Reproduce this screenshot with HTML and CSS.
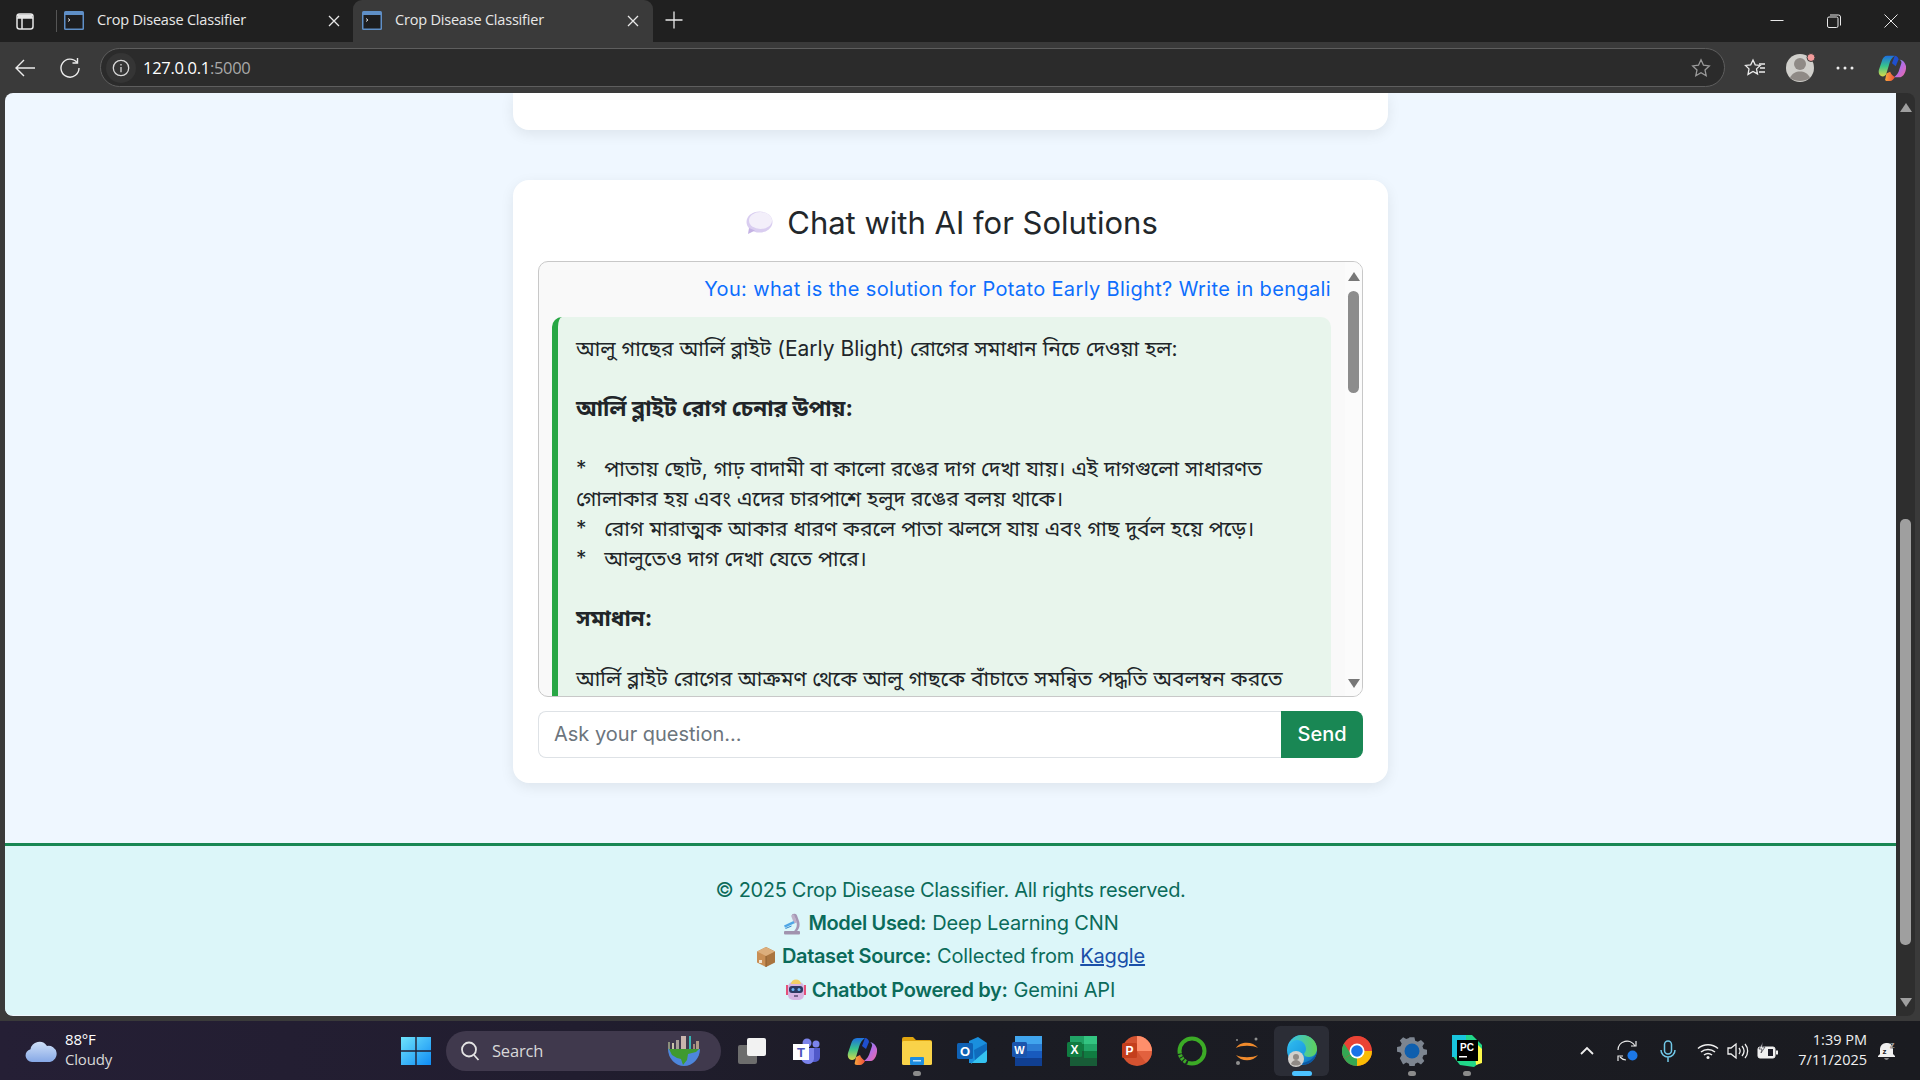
FILE: index.html
```html
<!DOCTYPE html>
<html lang="en">
<head>
    <meta charset="UTF-8">
    <meta name="viewport" content="width=device-width, initial-scale=1.0">
    <title>Crop Disease Classifier</title>
    <link rel="stylesheet" href="styles.css">
</head>
<body>
<div class="screen">

    <!-- Tab strip -->
    <header class="tabstrip">
        <svg class="tab-sidebar" width="20" height="20" viewBox="0 0 20 20" fill="none" stroke="#e6e6e6" stroke-width="1.5"><rect x="2" y="3" width="16" height="15" rx="2.5"/><path d="M2 7h16M7 7v11"/><path d="M3 3.5h14v3.5H3z" fill="#e6e6e6" stroke="none"/></svg>
        <span class="tab-divider"></span>
        <div class="tab">
            <svg class="favicon" width="20" height="19" viewBox="0 0 20 19"><rect width="20" height="19" rx="1.5" fill="#5f8fc7"/><rect x="1.5" y="4" width="17" height="13.5" fill="#1d1d1f"/><path d="M4 7.5l2 1.5-2 1.5" stroke="#d8d8d8" fill="none"/></svg>
            <span class="tab-title">Crop Disease Classifier</span>
            <svg class="tab-close" width="14" height="14" viewBox="0 0 14 14" stroke="#e8e8e8" stroke-width="1.3"><path d="M2 2l10 10M12 2L2 12"/></svg>
        </div>
        <div class="tab tab-active">
            <svg class="favicon" width="20" height="19" viewBox="0 0 20 19"><rect width="20" height="19" rx="1.5" fill="#5f8fc7"/><rect x="1.5" y="4" width="17" height="13.5" fill="#1d1d1f"/><path d="M4 7.5l2 1.5-2 1.5" stroke="#d8d8d8" fill="none"/></svg>
            <span class="tab-title">Crop Disease Classifier</span>
            <svg class="tab-close" width="14" height="14" viewBox="0 0 14 14" stroke="#e8e8e8" stroke-width="1.3"><path d="M2 2l10 10M12 2L2 12"/></svg>
        </div>
        <svg class="tab-new" width="18" height="18" viewBox="0 0 18 18" stroke="#e8e8e8" stroke-width="1.3"><path d="M9 0.5v17M0.5 9h17"/></svg>
        <div class="window-controls">
            <svg width="14" height="14" viewBox="0 0 14 14" stroke="#e8e8e8" stroke-width="1"><path d="M0.5 6.5h13"/></svg>
            <svg width="14" height="14" viewBox="0 0 14 14" fill="none" stroke="#e8e8e8" stroke-width="1"><rect x="0.5" y="3" width="10.5" height="10.5" rx="1.5"/><path d="M3 1h8.5A2 2 0 0 1 13.5 3v8.5"/></svg>
            <svg width="14" height="14" viewBox="0 0 14 14" stroke="#e8e8e8" stroke-width="1"><path d="M0.5 0.5l13 13M13.5 0.5l-13 13"/></svg>
        </div>
    </header>

    <!-- Address bar -->
    <div class="toolbar">
        <svg class="tool-back" width="22" height="20" viewBox="0 0 22 20" fill="none" stroke="#ececec" stroke-width="1.4"><path d="M21 10H2M10 2l-8 8 8 8"/></svg>
        <svg class="tool-reload" width="22" height="22" viewBox="0 0 22 22" fill="none" stroke="#ececec" stroke-width="1.4"><path d="M18 5.5A9 9 0 1 0 20 11"/><path d="M18.5 1v5h-5"/></svg>
        <div class="addressbar">
            <span class="site-info"><svg width="18" height="18" viewBox="0 0 18 18" fill="none" stroke="#d8d8d8" stroke-width="1.3"><circle cx="9" cy="9" r="7.7"/><path d="M9 8v5.2M9 5v1.5"/></svg></span>
            <span class="url">127.0.0.1<span class="url-port">:5000</span></span>
            <svg class="addr-star" width="20" height="20" viewBox="0 0 20 20" fill="none" stroke="#9a9a9a" stroke-width="1.3"><path d="M10 1.8l2.5 5.4 5.8.7-4.3 4 1.2 5.8-5.2-2.9-5.2 2.9 1.2-5.8-4.3-4 5.8-.7z"/></svg>
        </div>
        <svg class="tool-fav" width="22" height="20" viewBox="0 0 22 20" fill="none" stroke="#ececec" stroke-width="1.3"><path d="M9 2l2.200 4.800 5 .6-3.700 3.500 1 5-4.500-2.500-5 3 1-5.500-3.500-3.500 5.200-.6z"/><path d="M15 6h6M16 10h5M15 14h6"/></svg>
        <span class="avatar">
            <svg width="30" height="30" viewBox="0 0 30 30"><circle cx="14" cy="15" r="14" fill="#d0cfcb"/><circle cx="14" cy="11" r="6" fill="#8f8a86"/><path d="M4 25c2-5 6-6.500 10-6.500S22 20 24 25c-5.500 4-14.500 4-20 0z" fill="#8f8a86"/><circle cx="25" cy="4.500" r="4" fill="#f49c9c" stroke="#3a3a3a"/></svg>
        </span>
        <svg class="tool-more" width="18" height="4" viewBox="0 0 18 4" fill="#ececec"><circle cx="2" cy="2" r="1.500"/><circle cx="9" cy="2" r="1.500"/><circle cx="16" cy="2" r="1.500"/></svg>
        <svg class="tool-copilot" width="28" height="28" viewBox="0 0 30 30"><use href="#copilot"/></svg>
    </div>

    <div class="viewport">
        <main class="page">
            <div class="card card-cut"></div>

            <section class="card chat-card">
                <h2 class="chat-title">
                    <svg width="30" height="24" viewBox="0 0 30 24"><ellipse cx="16.500" cy="11" rx="13" ry="10.500" fill="#d9cdf0"/><ellipse cx="17.500" cy="9.500" rx="11.500" ry="8.500" fill="#f3effa"/><path d="M6 17l-1 6 7-3.500z" fill="#c4b2e4"/></svg>
                    Chat with AI for Solutions
                </h2>

                <div class="chat-box">
                    <div class="chat-scroll">
                        <p class="msg-user">You: what is the solution for Potato Early Blight? Write in bengali</p>
                        <div class="msg-bot">
                            আলু গাছের আর্লি ব্লাইট (Early Blight) রোগের সমাধান নিচে দেওয়া হল:<br><br>
                            <strong>আর্লি ব্লাইট রোগ চেনার উপায়:</strong><br><br>
                            *&nbsp;&nbsp; পাতায় ছোট, গাঢ় বাদামী বা কালো রঙের দাগ দেখা যায়। এই দাগগুলো সাধারণত<br>
                            গোলাকার হয় এবং এদের চারপাশে হলুদ রঙের বলয় থাকে।<br>
                            *&nbsp;&nbsp; রোগ মারাত্মক আকার ধারণ করলে পাতা ঝলসে যায় এবং গাছ দুর্বল হয়ে পড়ে।<br>
                            *&nbsp;&nbsp; আলুতেও দাগ দেখা যেতে পারে।<br><br>
                            <strong>সমাধান:</strong><br><br>
                            আর্লি ব্লাইট রোগের আক্রমণ থেকে আলু গাছকে বাঁচাতে সমন্বিত পদ্ধতি অবলম্বন করতে<br>
                            হবে। নিচে কিছু পদ্ধতি আলোচনা করা হলো:
                        </div>
                    </div>
                    <div class="chat-scrollbar">
                        <span class="arrow-up arrow-dark"></span>
                        <span class="chat-thumb"></span>
                        <span class="arrow-down arrow-dark"></span>
                    </div>
                </div>

                <form class="chat-form">
                    <input class="chat-input" type="text" placeholder="Ask your question...">
                    <button class="chat-send" type="button">Send</button>
                </form>
            </section>

            <footer class="site-footer">
                <p class="footer-copy">© 2025 Crop Disease Classifier. All rights reserved.</p>
                <p>
                    <svg class="emoji" width="20" height="22" viewBox="0 0 20 22"><path d="M10 1.500a3 2.500 0 0 1 5 1l2 5.500c1.500 4.500 0 8.500-2.500 10.500h-3c2.500-2 4-5.500 3-9l-1.500-4.500c-1.800.5-3-1.500-3-3.500z" fill="#a596b4"/><path d="M9 2.500l3-1 3 8-3 1z" fill="#bdb1c9"/><path d="M2 12.500l9.500-4.500 1 2.200-9.500 4.500z" fill="#4fa6e6"/><path d="M3.500 15.500l6-2.500" stroke="#2f86cc"/><rect x="2" y="18" width="16" height="3.500" rx="1" fill="#a193ae"/></svg>
                    <strong>Model Used:</strong> Deep Learning CNN
                </p>
                <p>
                    <svg class="emoji" width="20" height="22" viewBox="0 0 20 22"><path d="M10 1l9 4.500v11L10 21z" fill="#a9743f"/><path d="M10 1L1 5.500v11L10 21z" fill="#c98f55"/><path d="M1 5.500L10 10l9-4.500-9-4.500z" fill="#dcae7c"/><path d="M10 10v11" stroke="#8d5f31"/><rect x="3" y="14" width="3" height="3" fill="#efe2cf"/></svg>
                    <strong>Dataset Source:</strong> Collected from <a class="footer-link" href="#">Kaggle</a>
                </p>
                <p>
                    <svg class="emoji" width="20" height="22" viewBox="0 0 20 22"><path d="M1 6v10M19 6v10" stroke="#e4527a" stroke-width="2"/><rect x="2" y="3" width="16" height="18" rx="5" fill="#d6b5e2"/><rect x="3" y="7" width="14" height="7" rx="3" fill="#2c3a63"/><circle cx="7" cy="10.500" r="1.500" fill="#6fb7f4"/><circle cx="13" cy="10.500" r="1.500" fill="#6fb7f4"/><path d="M5 5a5 4.500 0 0 1 10 0z" fill="#f2cf66"/><path d="M8 17h4" stroke="#4a3a63" stroke-width="1.300"/></svg>
                    <strong>Chatbot Powered by:</strong> Gemini API
                </p>
            </footer>
        </main>

        <div class="scrollbar">
            <span class="arrow-up"></span>
            <span class="scroll-thumb"></span>
            <span class="arrow-down"></span>
        </div>
    </div>

    <!-- Windows taskbar -->
    <div class="taskbar">
        <div class="weather">
            <svg width="32" height="24" viewBox="0 0 32 24"><defs><linearGradient id="cloud" x1="0" y1="0" x2="0" y2="1"><stop offset="0" stop-color="#cfe0f8"/><stop offset="1" stop-color="#86a8e6"/></linearGradient></defs><path d="M7 23a6.500 6.500 0 0 1-1.500-12.800A9 9 0 0 1 22 7a8 8 0 0 1 3 16z" fill="url(#cloud)"/></svg>
            <div class="weather-text"><span>88°F</span><span class="weather-sub">Cloudy</span></div>
        </div>

        <svg class="win-logo" width="30" height="30" viewBox="0 0 30 30"><defs><linearGradient id="win" x1="0" y1="0" x2="1" y2="1"><stop offset="0" stop-color="#6fe3fb"/><stop offset="1" stop-color="#0f8cf5"/></linearGradient></defs><path d="M0 1h14.300v13.300H0zM15.700 1H30v13.300H15.700zM0 15.700h14.300V29H0zM15.700 15.700H30V29H15.700z" fill="url(#win)"/></svg>

        <div class="search">
            <svg width="20" height="22" viewBox="0 0 20 22" fill="none" stroke="#e4e4e4" stroke-width="1.800"><circle cx="9" cy="9.500" r="7"/><path d="M14 15l4.500 5"/></svg>
            <span class="search-label">Search</span>
            <svg class="search-globe" width="34" height="30" viewBox="0 0 34 30"><rect x="1" y="6" width="2" height="8" fill="#8b8f7c"/><rect x="5" y="7" width="2" height="8" fill="#c9c4a8"/><rect x="9" y="4" width="3" height="11" fill="#a89f97"/><rect x="14" y="0" width="5" height="15" fill="#c9b4ad"/><rect x="22" y="0" width="2" height="15" fill="#35b5b5"/><rect x="26" y="8" width="2" height="7" fill="#a58b78"/><rect x="29" y="5" width="3" height="10" fill="#b09a86"/><path d="M1 13h32a16 17 0 0 1-32 0z" fill="#4d86dc"/><path d="M2 13h30l-3 3-8 2-1 6-4 5-2-6-4-1-5-3z" fill="#3f9a2f"/></svg>
        </div>

        <div class="task-apps">
            <span class="app">
                <svg width="30" height="30" viewBox="0 0 30 30"><rect x="1" y="9" width="19" height="19" rx="2" fill="#6d6d6d"/><rect x="10" y="2" width="19" height="18" rx="2" fill="#f2f2f2"/></svg>
            </span>
            <span class="app">
                <svg width="30" height="30" viewBox="0 0 30 30"><circle cx="24" cy="8" r="3.500" fill="#7b83eb"/><circle cx="15" cy="7" r="4.500" fill="#7b83eb"/><path d="M19 12h9v9a5 5 0 0 1-5 5h-4z" fill="#5059c9"/><path d="M9 12h13v11a6 6 0 0 1-6 5 7 7 0 0 1-7-7z" fill="#7b83eb"/><rect x="1" y="8" width="16" height="16" fill="#fff"/><text class="app-letter" x="9" y="21" fill="#4b53bc" font-size="13">T</text></svg>
            </span>
            <span class="app"><svg width="30" height="34" viewBox="0 0 30 30"><use href="#copilot"/></svg></span>
            <span class="app app-open">
                <svg width="30" height="30" viewBox="0 0 30 30"><path d="M0 3a2 2 0 0 1 2-2h9l3 3h14a2 2 0 0 1 2 2v3H0z" fill="#e0a50f"/><rect y="5" width="30" height="24" rx="1.500" fill="#f9d349"/><rect x="8" y="21" width="14" height="8" rx="1" fill="#1d8de0"/><rect x="11" y="24" width="8" height="1.500" fill="#bfe3fb"/></svg>
            </span>
            <span class="app">
                <svg width="30" height="30" viewBox="0 0 30 30"><path d="M12 5l9-4 9 6v17a3 3 0 0 1-3 3H12z" fill="#1a8fdd"/><path d="M14 28l16-16v12a3 3 0 0 1-3 3H14z" fill="#35c3f0"/><path d="M17 14l13-7v7L18 24z" fill="#0f6cbd"/><rect y="7" width="16" height="16" rx="1.500" fill="#0f62b5"/><text class="app-letter" x="8" y="20" fill="#fff" font-size="13">O</text></svg>
            </span>
            <span class="app">
                <svg width="30" height="30" viewBox="0 0 30 30"><rect x="3" y="0" width="27" height="8" fill="#41a5ee"/><rect x="3" y="8" width="27" height="7" fill="#2b7cd3"/><rect x="3" y="15" width="27" height="7" fill="#185abd"/><rect x="3" y="22" width="27" height="8" fill="#103f91"/><rect y="6" width="15" height="15" rx="1.500" fill="#1a55ad"/><text class="app-letter" x="7.500" y="18" fill="#fff" font-size="11">W</text></svg>
            </span>
            <span class="app">
                <svg width="30" height="30" viewBox="0 0 30 30"><rect x="3" y="0" width="14" height="8" fill="#21a366"/><rect x="17" y="0" width="13" height="8" fill="#33c481"/><rect x="3" y="8" width="14" height="7" fill="#107c41"/><rect x="17" y="8" width="13" height="7" fill="#21a366"/><rect x="3" y="15" width="14" height="7" fill="#185c37"/><rect x="17" y="15" width="13" height="7" fill="#107c41"/><rect x="3" y="22" width="27" height="8" fill="#185c37"/><rect y="6" width="15" height="15" rx="1.500" fill="#107c41"/><text class="app-letter" x="7.500" y="18" fill="#fff" font-size="12">X</text></svg>
            </span>
            <span class="app">
                <svg width="30" height="30" viewBox="0 0 30 30"><circle cx="15" cy="15" r="15" fill="#d35230"/><path d="M15 0a15 15 0 0 1 15 15H15z" fill="#ff8f6b"/><path d="M15 15h15a15 15 0 0 1-6 12z" fill="#ed6c47" opacity=".6"/><rect y="7" width="15" height="15" rx="1.500" fill="#c43e1c"/><text class="app-letter" x="7.500" y="19" fill="#fff" font-size="12">P</text></svg>
            </span>
            <span class="app">
                <svg width="30" height="32" viewBox="0 0 30 30"><circle cx="15" cy="15" r="12.500" fill="none" stroke="#3cab26" stroke-width="4"/><circle cx="15" cy="15" r="12.500" fill="none" stroke="#1d2028" stroke-width="4.400" stroke-dasharray="2 2.500 1 2.500 1 2.500 1 3 0 100" transform="rotate(110 15 15)"/></svg>
            </span>
            <span class="app">
                <svg width="30" height="30" viewBox="0 0 30 30" fill="none"><path d="M4 12C8 5 21 5 26 12C21 9 9 9 4 12z" fill="#f08a2c"/><path d="M4 19c5 7 17 7 22 0-5 3-17 3-22 0z" fill="#f08a2c"/><circle cx="24" cy="3" r="1.500" fill="#8f8f8f"/><circle cx="6" cy="27" r="2" fill="#8f8f8f"/><circle cx="5" cy="4" r="1" fill="#8f8f8f"/></svg>
            </span>
            <span class="app app-active">
                <svg width="32" height="36" viewBox="0 0 32 34"><defs><linearGradient id="edge" x1="0" y1="0" x2="1" y2="1"><stop offset="0" stop-color="#35c1f1"/><stop offset=".6" stop-color="#1b9de2"/><stop offset="1" stop-color="#0c59a4"/></linearGradient><linearGradient id="edge2" x1="0" y1="0" x2="1" y2="0"><stop offset="0" stop-color="#35c1f1"/><stop offset="1" stop-color="#5fd058"/></linearGradient></defs><circle cx="16" cy="16" r="15" fill="url(#edge)"/><path d="M2 13C4 5 10 1 16 1c8 0 15 6 15 14 0 5-4 8-8 8-3 0-5-1-5-3 0-1 2-2 2-5 0-5-4-9-9-9-4 0-7 3-9 7z" fill="url(#edge2)"/><path d="M31 17a15 15 0 0 1-9 13c-3 1-6 1-7-1 4 0 14-3 16-12z" fill="#0c59a4"/><circle cx="10" cy="25" r="8" fill="#d2d0cc"/><circle cx="10" cy="23" r="3" fill="#8f8a86"/><path d="M5 30c1-3 3-4 5-4s4 1 5 4c-3 2-7 2-10 0z" fill="#8f8a86"/></svg>
            </span>
            <span class="app">
                <svg width="30" height="30" viewBox="0 0 30 30"><circle cx="15" cy="15" r="15" fill="#ea4335"/><path d="M15 15L2 22.500A15 15 0 0 0 15 30l6-7z" fill="#34a853"/><path d="M15 15h15A15 15 0 0 1 15 30z" fill="#fbbc04"/><path d="M15 8h13.100a15 15 0 0 0-26-.5L9 18z" fill="#ea4335"/><path d="M2 7.500A15 15 0 0 0 2 22.500L9 18z" fill="#34a853"/><circle cx="15" cy="15" r="7.500" fill="#fff"/><circle cx="15" cy="15" r="5.800" fill="#1a73e8"/></svg>
            </span>
            <span class="app app-open">
                <svg width="30" height="30" viewBox="0 0 30 30"><path d="M12.500 1h5l.8 3.700 2.800 1.200 3.300-2 3.500 3.500-2 3.300 1.200 2.800 3.700.8v5l-3.700.8-1.200 2.800 2 3.300-3.500 3.500-3.300-2-2.800 1.200-.8 3.700h-5l-.8-3.700-2.800-1.200-3.300 2L2.100 23.200l2-3.300-1.200-2.800L-.8 16.300v-5l3.700-.8 1.200-2.800-2-3.300L5.600 1l3.300 2 2.800-1.200z" fill="#7d8590" transform="translate(.8 .2) scale(.95)"/><circle cx="15" cy="15" r="7.500" fill="#0f5fae"/></svg>
            </span>
            <span class="app app-open">
                <svg width="30" height="32" viewBox="0 0 30 32"><path d="M0 0h20l10 10v16l-8 6-14-2L0 20z" fill="#21d789"/><path d="M22 6l8 8v14l-6 2z" fill="#fcf84a"/><path d="M0 0h14v8L4 22H0z" fill="#19c5dd"/><rect x="5" y="5" width="21" height="21" fill="#000"/><text class="app-letter" x="15" y="16" fill="#fff" font-size="10">PC</text><rect x="7" y="21" width="8" height="1.500" fill="#fff"/></svg>
            </span>
        </div>

        <div class="tray">
            <svg class="tray-chevron" width="14" height="9" viewBox="0 0 14 9" fill="none" stroke="#eee" stroke-width="1.800"><path d="M1 8l6-6 6 6"/></svg>
            <svg class="tray-sync" width="22" height="22" viewBox="0 0 22 22" fill="none" stroke="#ececec" stroke-width="1.200"><path d="M1 10a9 9 0 0 1 17-4"/><path d="M19 1v5h-5"/><path d="M9 20a9 9 0 0 1-6-3"/><path d="M1 21v-5h5"/><circle cx="15.500" cy="15.500" r="5" fill="#1c78e8" stroke="none"/></svg>
            <svg class="tray-mic" width="16" height="22" viewBox="0 0 16 22" fill="none" stroke="#71c8e8" stroke-width="1.500"><rect x="4.500" y="1" width="7" height="13" rx="3.500"/><path d="M1 10a7 7 0 0 0 14 0M8 17v5"/></svg>
            <svg class="tray-wifi" width="22" height="18" viewBox="0 0 22 18" fill="none" stroke="#f0f0f0" stroke-width="1.500"><path d="M1 6.500c5.500-5 14.500-5 20 0M4 10c4-3.500 10-3.500 14 0M7 13c2.500-2 5.500-2 8 0"/><circle cx="11" cy="15.500" r="1.500" fill="#f0f0f0" stroke="none"/></svg>
            <svg class="tray-volume" width="22" height="18" viewBox="0 0 22 18" fill="none" stroke="#f0f0f0" stroke-width="1.300"><path d="M1 6h3l5-4v14l-5-4H1z"/><path d="M12 6c1.500 2 1.500 4 0 6M15 4c2.500 3 2.500 7 0 10M18 2c3.500 4 3.500 10 0 14"/></svg>
            <svg class="tray-battery" width="22" height="18" viewBox="0 0 22 18"><rect x="1" y="5" width="17" height="11" rx="2" fill="#f0f0f0" stroke="#f0f0f0"/><rect x="19" y="8.500" width="2" height="4" fill="#f0f0f0"/><rect x="11" y="7" width="5" height="7" fill="#1c1c26"/><path d="M6 0L2 7h3l-1 4 4-6H5z" fill="#f0f0f0" stroke="#1c1c26" stroke-width=".6"/></svg>
            <div class="clock"><span>1:39 PM</span><span>7/11/2025</span></div>
            <svg class="tray-bell" width="20" height="20" viewBox="0 0 20 20"><path d="M8 2a6 6 0 0 0-6 6v5l-2 2v1h17v-1l-2-2V8a6 6 0 0 0-7-6z" fill="#f0f0f0"/><path d="M6 17.500a3 2 0 0 0 5 0z" fill="#f0f0f0"/><text class="bell-z" x="4.500" y="13" font-size="8" fill="#1c1c26">z</text><text class="bell-z" x="12" y="7" font-size="9" fill="#f0f0f0" stroke="#1c1c26" stroke-width=".3">z</text></svg>
        </div>
    </div>

    <!-- Shared copilot mark -->
    <svg class="defs-only" width="0" height="0">
        <defs>
            <linearGradient id="cp1" x1="0" y1="0" x2="0" y2="1"><stop offset="0" stop-color="#1d6fe0"/><stop offset=".5" stop-color="#38c48c"/><stop offset="1" stop-color="#d8d94a"/></linearGradient>
            <linearGradient id="cp2" x1="0" y1="0" x2="1" y2="1"><stop offset="0" stop-color="#4aa8f0"/><stop offset=".5" stop-color="#b56ce6"/><stop offset="1" stop-color="#f06aa0"/></linearGradient>
            <linearGradient id="cp3" x1="0" y1="0" x2="1" y2="0"><stop offset="0" stop-color="#f8a53b"/><stop offset="1" stop-color="#ef4f3c"/></linearGradient>
            <symbol id="copilot" viewBox="0 0 30 30">
                <path d="M10 2h8c-3 2-5 5-6 9l-3 10c-.5 2-2 3-4 3C2 24 0 21 1 17l3-9c1-4 3-6 6-6z" fill="url(#cp1)"/>
                <path d="M22 6c4 0 7 3 8 7 .5 5-2 11-6 12h-7c3-2 5-5 6-9l2-6c.5-2-1-4-3-4z" fill="url(#cp2)"/>
                <path d="M18 2c2 0 4 2 4 4l-3 7-4-3z" fill="#1f4fcf"/>
                <path d="M9 21l4-2c1 3 3 4 5 6-1 2-3 4-5 4h-3c-2 0-3-1-2-3z" fill="url(#cp3)"/>
            </symbol>
        </defs>
    </svg>
</div>
</body>
</html>
```

FILE: styles.css
```css
* { box-sizing: border-box; }
html, body { margin: 0; height: 100%; overflow: hidden; }
body { font-family: "Open Sans", "Liberation Sans", sans-serif; color: #fff; background: #3a3a3a; }
p, h2 { margin: 0; }
svg { display: block; flex-shrink: 0; }

.screen { width: 1920px; height: 1080px; display: flex; flex-direction: column; }

/* tab strip */
.tabstrip { height: 42px; background: #202020; display: flex; align-items: center; padding-left: 15px; }
.tab-divider { width: 1px; height: 22px; background: #555; margin-left: 21px; }
.tab { width: 296px; height: 42px; display: flex; align-items: center; padding: 0 12px 0 7px; font-size: 14.5px; letter-spacing: -0.2px; color: #e8e8e8; }
.tab-active { width: 300px; padding-left: 9px; padding-right: 13px; background: #3a3a3a; border-radius: 9px 9px 0 0; }
.tab-title { margin-left: 13px; margin-bottom: 3px; flex: 1; white-space: nowrap; }
.favicon { margin-bottom: 2px; }
.tab-close { margin-bottom: 1px; }
.tab-new { margin-left: 12px; margin-bottom: 2px; }
.window-controls { margin-left: auto; display: flex; align-items: center; gap: 43px; padding-right: 22px; }

/* toolbar */
.toolbar { height: 51px; background: #3a3a3a; display: flex; align-items: center; padding-left: 14px; }
.tool-reload { margin-left: 23px; }
.addressbar { margin-left: 19px; width: 1625px; height: 39px; display: flex; align-items: center; background: #2b2b2b; border: 1px solid #5e5e5e; border-radius: 20px; padding: 0 11px 0 5px; }
.site-info { width: 30px; height: 30px; border-radius: 50%; background: #353535; display: flex; align-items: center; justify-content: center; }
.url { margin-left: 7px; font-size: 16.5px; letter-spacing: -0.3px; color: #fff; }
.url-port { color: #a8a8a8; }
.addr-star { margin-left: auto; margin-right: 2px; }
.tool-fav { margin-left: 19px; }
.avatar { margin-left: 20px; }
.tool-more { margin-left: 20px; }
.tool-copilot { margin-left: 24px; }

/* page area */
.viewport { height: 923px; display: flex; padding-left: 5px; background: #3a3a3a; }
.page { width: 1891px; height: 923px; overflow: hidden; background: #eff7ff; border-radius: 8px 0 0 8px; font-family: Inter, "Noto Sans", "Noto Sans Bengali", "Liberation Sans", sans-serif; color: #212529; }
.card { width: 875px; margin: 0 auto; background: #fff; border-radius: 16px; box-shadow: 0 4px 14px rgba(0, 0, 0, 0.08); }
.card-cut { height: 37px; border-radius: 0 0 16px 16px; }

.chat-card { margin-top: 50px; padding: 25px; height: 603px; }
.chat-title { height: 34px; margin-top: 1px; margin-bottom: 21px; display: flex; align-items: center; justify-content: center; gap: 14px; font-size: 31px; line-height: 34px; font-weight: 400; color: #22272b; }

.chat-box { height: 436px; display: flex; background: #f9f9f9; border: 1px solid #c8c8c8; border-radius: 10px; overflow: hidden; }
.chat-scroll { flex: 1; min-width: 0; padding: 12px 14px 12px 13px; overflow: hidden; }
.msg-user { text-align: right; font-size: 20px; line-height: 30px; margin-bottom: 13px; letter-spacing: 0.36px; color: #0d6efd; white-space: nowrap; }
.msg-bot { padding: 17px 18px; background: #e8f5ec; border-left: 6px solid #28a745; border-radius: 10px; font-size: 21px; line-height: 30px; color: #212529; white-space: nowrap; }
.msg-bot strong { font-size: 22.5px; line-height: 1; }
.chat-scrollbar { width: 17px; background: #fbfbfb; display: flex; flex-direction: column; align-items: center; padding: 10px 0 8px; }
.chat-thumb { width: 11px; height: 102px; margin-top: 10px; margin-bottom: auto; background: #8c8c8c; border-radius: 6px; }

.chat-form { display: flex; margin-top: 14px; height: 47px; }
.chat-input { flex: 1; min-width: 0; height: 47px; padding: 0 15px 2px; font: 20px Inter, sans-serif; border: 1px solid #dee2e6; border-right: none; border-radius: 8px 0 0 8px; outline: none; }
.chat-input::placeholder { color: #6c757d; }
.chat-send { width: 82px; height: 47px; padding-bottom: 2px; border: none; background: #198754; color: #fff; font: 500 20px Inter, sans-serif; border-radius: 0 8px 8px 0; }

.site-footer { margin-top: 60px; height: 172px; padding-top: 28px; background: #dcf6f9; border-top: 3px solid #198754; text-align: center; font-size: 20px; line-height: 33.2px; letter-spacing: -0.15px; color: #0b6b5a; }
.site-footer p { display: flex; justify-content: center; align-items: center; gap: 0.3em; }
.footer-copy { letter-spacing: -0.33px; }
.site-footer strong { font-weight: 600; letter-spacing: -0.35px; }
.footer-link { color: #1a4fa8; }

/* browser scrollbar */
.scrollbar { width: 19px; height: 923px; background: #2e2e2e; border-radius: 0 8px 8px 0; display: flex; flex-direction: column; align-items: center; padding: 10px 0 9px; }
.scroll-thumb { width: 11px; height: 426px; margin-top: 407px; margin-bottom: auto; background: #9f9f9f; border-radius: 5px; }
.arrow-up, .arrow-down { width: 0; height: 0; border-left: 6px solid transparent; border-right: 6px solid transparent; }
.arrow-up { border-bottom: 9px solid #9f9f9f; }
.arrow-down { border-top: 9px solid #9f9f9f; }
.arrow-dark { border-left-width: 6px; border-right-width: 6px; border-bottom-color: #777; border-top-color: #777; }

/* taskbar */
.taskbar { height: 59px; margin-top: 5px; display: flex; align-items: center; padding-left: 25px; background: linear-gradient(90deg, #251f35 0, #211d2f 30%, #1b1c24 50%, #1a1b20 100%); }
.weather { width: 376px; display: flex; align-items: center; gap: 8px; font-size: 15px; line-height: 20px; letter-spacing: -0.2px; }
.weather-text { display: flex; flex-direction: column; margin-bottom: 3px; }
.weather-sub { color: #d8d8d8; }
.search { margin-left: 15px; width: 275px; height: 40px; display: flex; align-items: center; padding: 0 20px 0 14px; background: #40394d; border-radius: 20px; }
.search-label { margin-left: 12px; font-size: 16.5px; color: #d8d8d8; letter-spacing: -0.2px; }
.search-globe { margin-left: auto; }
.task-apps { margin-left: 3px; display: flex; }
.app { position: relative; width: 55px; height: 50px; display: flex; align-items: center; justify-content: center; border-radius: 6px; }
.app-active { background: #2b2d36; }
.app-open::after, .app-active::after { content: ""; position: absolute; bottom: 0; left: 50%; transform: translateX(-50%); width: 8px; height: 5px; background: #8b8b8b; border-radius: 3px; }
.app-active::after { width: 20px; background: #4cc2ff; }
.app-letter { font-family: "Liberation Sans", sans-serif; font-weight: 700; text-anchor: middle; }
.bell-z { font-family: "Liberation Sans", sans-serif; font-weight: 700; }

.tray { margin-left: 86px; display: flex; align-items: center; }
.tray-sync { margin-left: 23px; }
.tray-mic { margin-left: 21px; }
.tray-wifi { margin-left: 21px; }
.tray-volume { margin-left: 8px; }
.tray-battery { margin-left: 8px; }
.clock { margin-left: 0; width: 88px; display: flex; flex-direction: column; align-items: flex-end; font-size: 14.5px; line-height: 20px; color: #f0f0f0; margin-bottom: 2px; }
.tray-bell { margin-left: 11px; }
.defs-only { position: absolute; }
```
